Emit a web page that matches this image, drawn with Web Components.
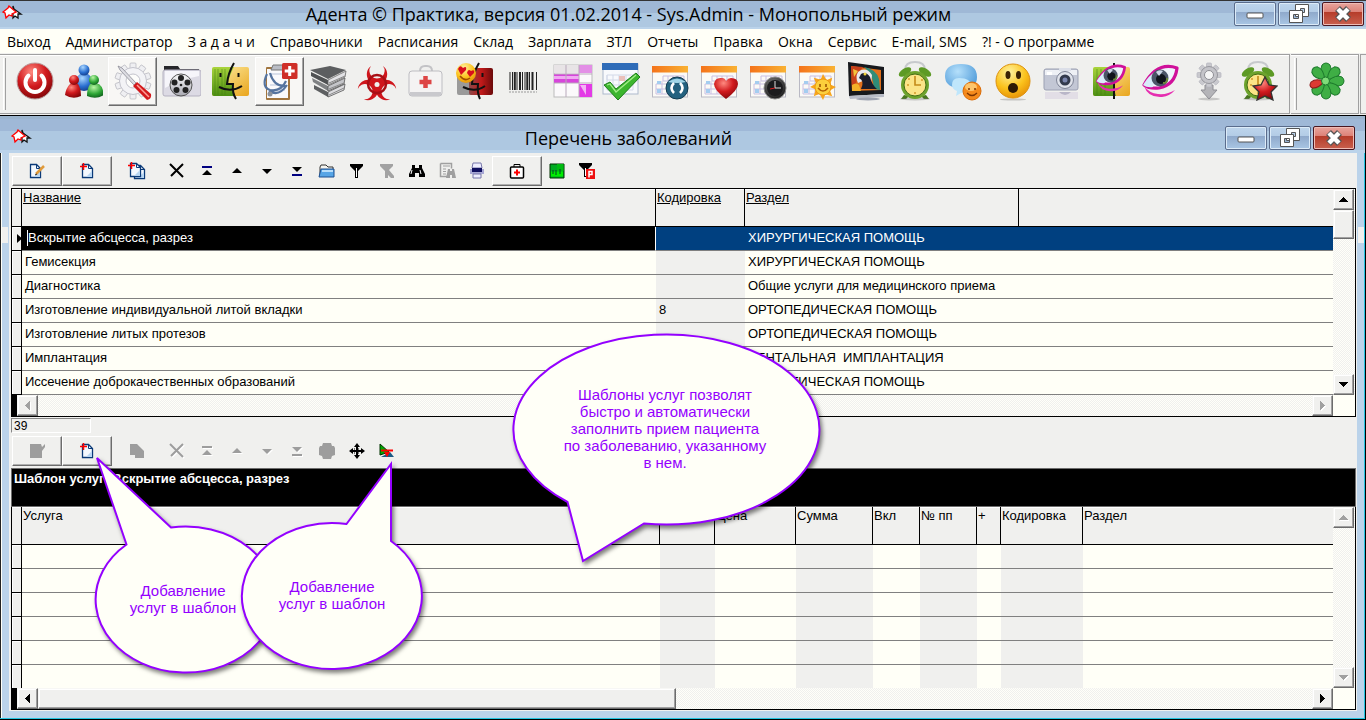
<!DOCTYPE html>
<html lang="ru">
<head>
<meta charset="utf-8">
<title>Адента © Практика</title>
<style>
html,body{margin:0;padding:0;background:#f0f0ee}
body{font-family:"Liberation Sans",Arial,sans-serif;font-size:13px;color:#000}
</style>
</head>
<body>
<practice-app></practice-app>
<script>
/* ---------- icon drawings ---------- */
const calendar = extra => `<rect x="2.500" y="6" width="35" height="30" fill="#fbfaf6" stroke="#b9b9c4"/><rect x="2" y="5" width="36" height="6.500" fill="url(#or)"/><g fill="none" stroke="#c9bfe2"><path d="M13 15h21v5h-21zM18 15v18M23 15v8M28 15v8M6 23h28M6 28h14M6 33h24M6 23v10M12 20v13"/></g><g fill="#a5cdf0"><path d="M7 20h4v3H7zM7 28h4v4H7z"/></g>${extra}`;
const finder = (a, b) => `<rect x="2" y="6" width="37" height="29" rx="2" fill="${b}"/><path d="M4 6h20q-5 9-6 17h5q0 7 2 12H4q-2 0-2-2V8q0-2 2-2z" fill="${a}"/>`;
const profile = `<path d="M24 2q-6 10-7 21h6q-1 9 3 15" fill="none" stroke="#111" stroke-width="2"/><path d="M9 26q12 6 23-1" fill="none" stroke="#111" stroke-width="2"/><path d="M10.500 12v4M28.500 12v4" stroke="#111" stroke-width="2"/>`;
const eye = (s) => `<g transform="${s}"><path d="M4 22Q17-2 37 5q-2 17-18 20Q9 26 4 22z" fill="#eef4fb" stroke="#d0109a" stroke-width="3.200" stroke-linejoin="round"/><path d="M3 22q6-10 12-13l-2 15q-6 1-10-2z" fill="#d9ecfa"/><circle cx="20" cy="15" r="8.500" fill="#4b5568"/><circle cx="21" cy="16" r="5" fill="#10141c"/><path d="M16 9q3-3 7-1l-4 5z" fill="#cfd8e8"/><path d="M23 20q5 0 4-5" stroke="#6c8b39" stroke-width="2" fill="none"/><path d="M4 23q4 12 18 11 8-1 13-7-8 5-17 4-9-1-14-8z" fill="#e62eb0"/></g>`;
const clock = `<path d="M10 9q0-8 10-8t10 8" fill="none" stroke="#c7c9cc" stroke-width="2"/><ellipse cx="10" cy="11" rx="7" ry="3.500" transform="rotate(-32 10 11)" fill="#5d9a25"/><ellipse cx="30" cy="11" rx="7" ry="3.500" transform="rotate(32 30 11)" fill="#5d9a25"/><path d="M9 34l-3 4h5l3-3zM31 34l3 4h-5l-3-3z" fill="#47761e"/><ellipse cx="20" cy="38" rx="15" ry="1.500" fill="#777" opacity=".35"/><circle cx="20" cy="24" r="14" fill="#6da32d"/><circle cx="20" cy="24" r="11" fill="#fbe487" stroke="#426d12"/><path d="M20 15v9l6 0" stroke="#c48a1a" stroke-width="1.600" fill="none"/><g fill="#d39b2a"><circle cx="13" cy="24" r="1"/><circle cx="20" cy="32" r="1"/><circle cx="27" cy="19" r="1"/><circle cx="14" cy="18" r="1"/></g>`;
const teeth = (n, cx, cy, r, w, h, c) => Array.from({length:n},(_,k)=>`<rect x="${cx-w/2}" y="${cy-r-h+1}" width="${w}" height="${h}" rx="1" fill="${c}" stroke="#b5b5bd" stroke-width=".7" transform="rotate(${k*360/n} ${cx} ${cy})"/>`).join('');
const DEFS = `<defs>
<radialGradient id="rd" cx=".4" cy=".25" r=".8"><stop offset="0" stop-color="#ff8a80"/><stop offset=".5" stop-color="#d11a1e"/><stop offset="1" stop-color="#7d0508"/></radialGradient>
<radialGradient id="bl" cx=".4" cy=".25" r=".8"><stop offset="0" stop-color="#a9d6ff"/><stop offset=".6" stop-color="#2a6fd0"/><stop offset="1" stop-color="#123a86"/></radialGradient>
<radialGradient id="sk" cx=".4" cy=".25" r=".9"><stop offset="0" stop-color="#b5e0fb"/><stop offset="1" stop-color="#3287cf"/></radialGradient>
<radialGradient id="gn" cx=".4" cy=".25" r=".8"><stop offset="0" stop-color="#b8f5a4"/><stop offset=".6" stop-color="#2da635"/><stop offset="1" stop-color="#0e5c1b"/></radialGradient>
<radialGradient id="yl" cx=".4" cy=".25" r=".85"><stop offset="0" stop-color="#fff3a0"/><stop offset=".55" stop-color="#fbc21c"/><stop offset="1" stop-color="#e28703"/></radialGradient>
<radialGradient id="bk" cx=".4" cy=".3" r=".8"><stop offset="0" stop-color="#777"/><stop offset="1" stop-color="#111"/></radialGradient>
<linearGradient id="or"><stop offset="0" stop-color="#f4731b"/><stop offset="1" stop-color="#f9b233"/></linearGradient>
<linearGradient id="gr" x2="0" y2="1"><stop offset="0" stop-color="#a9d43c"/><stop offset="1" stop-color="#4d8f12"/></linearGradient>
<linearGradient id="ye" x2="1" y2="1"><stop offset="0" stop-color="#fff0a8"/><stop offset="1" stop-color="#e9a51d"/></linearGradient>
<linearGradient id="dr"><stop offset="0" stop-color="#8a4a4a"/><stop offset=".5" stop-color="#c21a1a"/><stop offset="1" stop-color="#6b0a0a"/></linearGradient>
<linearGradient id="sv" x2="0" y2="1"><stop offset="0" stop-color="#fafafa"/><stop offset="1" stop-color="#a9a9b2"/></linearGradient></defs>`;
const arm = 'M13 0A12 12 0 1 0 27 0A9 9 0 1 1 13 0z';
const BIG = {
power:`<circle cx="21" cy="20" r="18" fill="url(#rd)" stroke="#b9a0a0"/><path d="M14.500 14.500a9.500 9.500 0 1 0 13 0" fill="none" stroke="#fff" stroke-width="4" stroke-linecap="round"/><path d="M21 9v10" stroke="#fff" stroke-width="4" stroke-linecap="round"/>`,
people:`<path d="M17 13q-5 3-5 14 9 6 18 0 0-11-5-14z" fill="url(#bl)"/><circle cx="21" cy="9" r="5.500" fill="url(#bl)"/><path d="M7 23q-4 4-5 11 8 5 16 1 0-8-3-12z" fill="url(#rd)"/><circle cx="11" cy="19" r="5" fill="url(#rd)"/><path d="M27 23q-3 5-3 12 9 4 17-1-1-8-5-11z" fill="url(#gn)"/><circle cx="31" cy="19" r="5" fill="url(#gn)"/>`,
tools:`${teeth(10,21,20,13,6,6,'#efeff2')}<circle cx="21" cy="20" r="13.500" fill="#f3f3f6" stroke="#c3c3cc"/><circle cx="21" cy="20" r="7" fill="#fdfdfb" stroke="#c3c3cc"/><path d="M6 5l4 2 14 15-2 2L8 9z" fill="#dcdce2" stroke="#8c8c96" stroke-width=".8"/><path d="M21 25l4-4 14 12q1 5-4 6z" fill="#d3181b"/><path d="M25 24l12 12" stroke="#ff9d97" stroke-width="1.500"/>`,
film:`<path d="M3 5h14l2 3h19v4H3z" fill="#26262a"/><rect x="2" y="9" width="38" height="26" rx="2" fill="#dcdae4" stroke="#b4b1c0"/><path d="M4 10h34v5q-18 3-34 12z" fill="#f6f5fa"/><circle cx="20" cy="24" r="11" fill="url(#sv)" stroke="#555"/><g fill="#222"><circle cx="20" cy="17" r="3"/><circle cx="26.500" cy="21.500" r="3"/><circle cx="24.500" cy="29" r="3"/><circle cx="15.500" cy="29" r="3"/><circle cx="13.500" cy="21.500" r="3"/><circle cx="20" cy="24" r="1.300"/></g>`,
finder:`${finder('url(#gr)','url(#ye)')}<g stroke="#3f7d10" opacity=".5"><path d="M5 8v26M8 8v26M12 8v26M15 8v26"/></g>${profile}`,
clip:`<rect x="7" y="6" width="24" height="33" rx="1" fill="#a1753e"/><rect x="8" y="8" width="21" height="29" fill="#fafafc"/><path d="M14 4h10l2 5H12z" fill="#b9bcc4" stroke="#777"/><path d="M11 13h15M11 24h15M11 29h15" stroke="#b9c4da"/><path d="M8 13q-6 13 3 16 11 2 16-9M11 12q4 14 16 13M10 30q10 6 18-6" fill="none" stroke="#56749f" stroke-width="2.200"/><circle cx="11" cy="33" r="2.500" fill="#8a929e"/><rect x="23" y="2" width="15.500" height="16" rx="1.500" fill="#cf2f28"/><path d="M30.700 5v10M25.700 10h10" stroke="#fff" stroke-width="3"/>`,
books:`<path d="M2 9l20-4 16 4-18 9z" fill="#5c5e60"/><path d="M3 11l17 8v5L3 15z" fill="#4f5153"/><path d="M20 19l18-9-1 6-17 8z" fill="#e2e2e5" stroke="#666" stroke-width=".8"/><path d="M4 17l16 8v5L5 21z" fill="#7f8183"/><path d="M20 25l17-8-1 6-16 7z" fill="#c4c5c9" stroke="#555" stroke-width=".8"/><path d="M6 24l14 7v5L6 28z" fill="#5e6062"/><path d="M20 31l17-8-1 6-16 7z" fill="#dcdcdf" stroke="#555" stroke-width=".8"/><path d="M21 22l16-7M21 28l15-6M21 34l15-7" stroke="#888"/>`,
bio:`<g fill="#cf161c" transform="translate(3 5) scale(.85)"><path d="${arm}"/><path d="${arm}" transform="rotate(120 20 22)"/><path d="${arm}" transform="rotate(240 20 22)"/></g><circle cx="20" cy="23" r="9" fill="none" stroke="#a80f15" stroke-width="2.500"/><circle cx="20" cy="23.500" r="2.500" fill="#f0f0ee"/>`,
aid:`<path d="M14 10q0-5 5-5h2q5 0 5 5" fill="none" stroke="#c3c3c6" stroke-width="2"/><rect x="3" y="10" width="33" height="25" rx="3" fill="#f4f3f3" stroke="#bdbdc2"/><path d="M4 31h31v2q0 2-3 2H7q-3 0-3-2z" fill="#c9c9cd"/><path d="M19.500 15v12M13.500 21h12" stroke="#dd4545" stroke-width="4.500"/>`,
love:`<rect x="2" y="14" width="18" height="20" rx="2" fill="#9a9a9a"/><rect x="14" y="7" width="24" height="27" rx="2" fill="url(#dr)"/><path d="M24 2q-7 12-7 21h6q-1 9 2 15" fill="none" stroke="#111" stroke-width="2"/><path d="M8 26q12 6 22-1M27.500 12v4" fill="none" stroke="#111" stroke-width="2"/><circle cx="11" cy="12" r="10" fill="url(#yl)"/><path d="M3 8q2-5 5-1 4-3 3 2l-5 5zM12 12q1-5 4-2 4-2 3 2l-4 4z" fill="#d80f1c"/><path d="M5 15q5 6 10 2" fill="none" stroke="#a14d00" stroke-width="1.500"/>`,
barcode:`<path d="M6 11v18M8.500 11v18M13 11v18M18.500 11v18M21 11v18M25.500 11v18M32.500 11v18" stroke="#222" stroke-width="1"/><path d="M10.800 11v18M16 11v18M23.300 11v18M28.500 11v18" stroke="#222" stroke-width="2"/><path d="M5 31h28" stroke="#999" stroke-dasharray="2 1"/>`,
table:`<rect x="1" y="4" width="38" height="32" fill="#fbf9fb" stroke="#bbb"/><path d="M1 4h25v8H1z" fill="#e8e4e6"/><path d="M26 4h13v8H26z" fill="#e38fe6"/><path d="M1 13h25v9H1z" fill="#d845dc"/><path d="M1 15h25v3H1z" fill="#f0a9f2"/><path d="M26 23h13v13H26z" fill="#e339e6"/><path d="M27 24h6v10z" fill="#f3b5f4"/><path d="M13 4v32M26 4v32M1 13h38M1 22h38" stroke="#b9a9bb"/>`,
check:`<rect x="1" y="3" width="35" height="30" fill="#f8f9fc" stroke="#aeb9cc"/><rect x="0" y="2" width="36" height="7" fill="#2f6cb8"/><path d="M5 14h26v5H5zM5 24h26M11 14v16M17 14v16M24 14v16M5 14v15h26V14" stroke="#d3d9e8" fill="none"/><path d="M17 15h6v5h-6z" fill="#eac0bb"/><path d="M2 24l6-3 6 7L34 12l4 4-22 23z" fill="#3cb62e" stroke="#1d7d1a"/><path d="M5 24l3-1 6 8 20-17" fill="none" stroke="#a3ed8a" stroke-width="1.300"/>`,
calSync:calendar(`<circle cx="27" cy="27" r="11" fill="#23617f" stroke="#123b50"/><path d="M18 21q9-7 18 0-9 2-18 0z" fill="#9fd5e8"/><path d="M24 22q-5 5 0 10M30 22q5 5 0 10" stroke="#fff" stroke-width="2.500" fill="none"/>`),
calHeart:calendar(`<path d="M27 38Q15 29 15 23q1-7 8-6 3 0 4 3 2-3 5-3 7 0 7 6 0 6-12 15z" fill="url(#rd)"/>`),
calClock:calendar(`<circle cx="27" cy="27" r="11" fill="url(#bk)" stroke="#888"/><circle cx="27" cy="27" r="8" fill="#1b1b1d"/><path d="M27 20v7h6" stroke="#ddd" fill="none"/><path d="M27 27l-5 1" stroke="#d22"/>`),
calSun:calendar(`<g fill="#f7a51c">${Array.from({length:8},(_,k)=>`<path d="M23 20l3-7 4 7z" transform="rotate(${k*45} 26 26)"/>`).join('')}</g><circle cx="26" cy="26" r="8" fill="#fccf3c" stroke="#ee9a13"/><path d="M23 23v3M29 23v3" stroke="#964f00" stroke-width="1.500"/><path d="M21 27q5 6 10 0" fill="none" stroke="#b15f00" stroke-width="1.500"/>`),
tv:`<path d="M2 1l36 5v27L3 35z" fill="#17191d"/><path d="M5 5l30 4v20L6 30z" fill="#e0701c"/><path d="M5 5l12 1q-9 9-6 24H6z" fill="#c8401a"/><path d="M7 8l5 2-4 6z" fill="#f2c33b"/><path d="M18 6q12 2 15 12l1 11-7-1q2-13-9-22z" fill="#2f8d78"/><path d="M12 11q8-6 14 3l-1 9-6-4-7 3q-3-6 0-11z" fill="#e9e9ec"/><path d="M15 13q5-3 9 3 2 8 7 12H15q4-8-2-11z" fill="#191d2a"/><circle cx="19" cy="13" r="1.500" fill="#f0d23c"/><path d="M6 24q4-3 7 0l2 6H6z" fill="#f2b028"/><path d="M3 35l35-2v3L4 38z" fill="#b8bcc7"/><ellipse cx="22" cy="38" rx="12" ry="1.500" fill="#9ea3b1"/>`,
clock,
chat:`<path d="M17 3q16 0 16 13 0 11-14 12l-6 5 0-6Q1 25 1 15 1 3 17 3z" fill="url(#sk)"/><path d="M15 17q12 0 12 8 0 7-10 7l-5 3 1-5q-5-2-5-6 0-7 7-7z" fill="#bfe6fb"/><circle cx="28" cy="30" r="9" fill="#f58a1c" stroke="#d96c08"/><ellipse cx="27" cy="26" rx="6" ry="4" fill="#fdc56c"/><path d="M25 27v2M31 27v2" stroke="#7d3500" stroke-width="1.500"/><path d="M23 32q5 5 10 0" fill="none" stroke="#7d3500" stroke-width="1.300"/>`,
wow:`<ellipse cx="20" cy="38.500" rx="13" ry="1" fill="#999" opacity=".5"/><circle cx="20" cy="20" r="17" fill="url(#yl)" stroke="#dd920f"/><ellipse cx="15" cy="14" rx="2.500" ry="4" fill="#3b2204"/><ellipse cx="25.500" cy="14" rx="2.500" ry="4" fill="#3b2204"/><circle cx="20" cy="27" r="5" fill="#2e1a05"/>`,
camera:`<rect x="2" y="8" width="34" height="21" rx="2" fill="#c3c7d5" stroke="#9ca1b3"/><path d="M3 9h32v5H3z" fill="#eef0f5"/><path d="M17 7h12v3H17z" fill="#dcdfe8"/><rect x="5" y="11" width="5" height="3" fill="#fff"/><circle cx="23" cy="19" r="8.500" fill="#dfe2ea" stroke="#7f8496"/><circle cx="23" cy="19" r="5.500" fill="#333a4c"/><circle cx="23" cy="19" r="2.500" fill="#7b86ac"/><path d="M3 31h33v7H3z" fill="#dcd6e2" opacity=".7"/><path d="M17 31q6 6 12 0z" fill="#b9b6c8"/>`,
eyeFace:`${finder('url(#gr)','url(#ye)')}<path d="M23 2v36" stroke="#111" stroke-width="2"/><path d="M6 8v26M10 8v26M14 8v26" stroke="#3f7d10" opacity=".5"/>${eye('translate(3 2) scale(.83)')}`,
eye:eye('translate(0 2)'),
gearDown:`<ellipse cx="20" cy="38" rx="11" ry="1.500" fill="#888" opacity=".4"/><path d="M16 24h8v5h4L20 38 12 29h4z" fill="#b4b4b8" stroke="#8e8e94"/>${teeth(8,20,14,8,5,5,'#c9c9ce')}<circle cx="20" cy="14" r="8.500" fill="#c4c4c9" stroke="#97979d"/><circle cx="20" cy="14" r="4.500" fill="#f5f5f5" stroke="#8e8e94"/>`,
clockStar:`${clock}<path d="M27 16l4 8 8 1-6 6 2 8-8-4-8 4 2-8-6-6 8-1z" fill="url(#rd)" stroke="#333" stroke-width="1.300"/>`,
flower:`<g fill="#3fae45" stroke="#1d7a2c">${[0,45,90,135,180,225,315].map(a=>`<path d="M20 18Q13 10 16 4q4-4 8 0 3 6-4 14z" transform="rotate(${a} 20 20)"/>`).join('')}</g><path d="M18 20q-7 6-13 4-3-3 0-6 6-3 13 2z" transform="rotate(-12 20 20)" fill="#dc3a33" stroke="#8f1c1c"/><circle cx="19.500" cy="20" r="4" fill="#7fdc79" stroke="#1d7a2c"/>`
};
const page = (x,y) => `<path d="M${x+.5} ${y+.5}h6l4 4v9h-10z" fill="#f4f9ff" stroke="#0b3a78" stroke-width="1.300"/><path d="M${x+6.5} ${y+.5}v4h4" fill="none" stroke="#0b3a78"/><path d="M${x+4} ${y+13}h6v-6z" fill="#b8d6f2"/>`;
const star = (x,y) => `<path d="M${x} ${y+3.5}h7M${x+3.500} ${y}v7" stroke="#f00" stroke-width="1.500"/>`;
const SMALL = {
edit:`${page(2,2)}<path d="M8 12l8-8" stroke="#e09a3a" stroke-width="2.500"/><path d="M7 13l2-1" stroke="#222"/>`,
newdoc:`${page(4,2)}${star(2,1)}`,
copydoc:`${page(6,3)}<g transform="translate(-1 -2)">${page(3,3)}</g>${star(0,0)}`,
cross:`<path d="M2 2l13 13M15 2L3 14" stroke="currentColor" stroke-width="2"/>`,
first:`<path d="M4 4h10v2H4z" fill="var(--nv,#000080)"/><path d="M4 13h10L9 8z" fill="currentColor"/>`,
up:`<path d="M4 11h10L9 6z" fill="currentColor"/>`,
down:`<path d="M4 7h10L9 12z" fill="currentColor"/>`,
last:`<path d="M4 12h10v2H4z" fill="var(--nv,#000080)"/><path d="M4 5h10L9 10z" fill="currentColor"/>`,
folder:`<path d="M2 14V5l1-2h5l2 2h5v3" fill="#f5f5f0" stroke="#333"/><path d="M1 15l2-8h13v8z" fill="#57a5e6" stroke="#1c4f90"/><path d="M4 8h11v2H4z" fill="#b9defa"/>`,
filter:`<path d="M2 2h13v2l-5 5v7H7V9L2 4z" fill="#000"/><path d="M8.500 6v9" stroke="#fff"/>`,
nofilter:`<path d="M2 2h13v2l-4 4 5 6v2h-3l-3-3v3H7V9L2 4z" fill="#a2a2a2"/>`,
binoc:`<path d="M4 3h3v3h4V3h3v3l3 6v3h-6v-4H7v4H1v-3l3-6z" fill="#000"/><path d="M4 8l-1 4M12 8l1 4" stroke="#fff"/>`,
sheet:`<path d="M2.500 1.500h11v5M2.500 1.500v13h7" fill="none" stroke="#a0a0a0" stroke-width="1.500"/><path d="M5 4h7M5 7h3M5 9.500h3M5 12h3" stroke="#a0a0a0"/><path d="M10 7h2v2h2V7h2l2 9h-4v-3h-2v3H8z" fill="#a0a0a0"/>`,
print:`<path d="M5 1h8l1 5H4z" fill="#eef" stroke="#77a"/><path d="M2 7h14v5H2z" fill="#a7a7d4"/><path d="M4 6h10v4H4z" fill="#101060"/><path d="M5 12h8v4H5z" fill="#eef" stroke="#77a"/>`,
med:`<path d="M6 5V2.500h6V5" fill="none" stroke="#000"/><rect x="2.500" y="5" width="13" height="11" rx="1" fill="#fff" stroke="#000" stroke-width="1.500"/><path d="M9 7.500v6M6 10.500h6" stroke="#f00" stroke-width="2"/>`,
green:`<path d="M2 2h14v14H2z" fill="#0a2" stroke="#030"/><path d="M9 2h6.500v7H9z" fill="#0b1"/><path d="M3 9.500h12v5H3z" fill="#0e0"/><path d="M5 8v4M8 8v5M12 7v5" stroke="#042"/>`,
filterP:`<path d="M1 1h13v2L9 8v7H6V8L1 3z" fill="#000"/><path d="M7.500 6v8" stroke="#fff"/><rect x="8" y="7" width="9" height="10" fill="#e11"/><path d="M11 15.500v-6h3v3h-3" fill="none" stroke="#fff" stroke-width="1.500"/>`,
editOff:`<path d="M2 2h11l1 3 3-3v3l-3 4v7H2z" fill="#9d9d9d"/>`,
copyOff:`<path d="M2 2h7l3 3 4 4v7H7v-3H2z" fill="#9d9d9d"/>`,
blob:`<path d="M5 1h8l1 3h2l1 2v7l-3 1-1 3H5l-1-3-3-1V6l1-2h2z" fill="#9d9d9d"/>`,
move:`<path d="M9 1l3 4H6zM9 17l3-4H6zM1 9l4-3v6zM17 9l-4-3v6z" fill="#000"/><path d="M9 4v10M4 9h10" stroke="#000" stroke-width="2"/><path d="M6 7h6M6 11h6" stroke="#000" stroke-dasharray="1 1"/>`,
chart:`<path d="M2 2l9 8-9 3z" fill="#0a0" stroke="#030"/><path d="M3 15h13l-4-5z" fill="#1c5a84"/><path d="M3 8.500h12" stroke="#f00" stroke-width="2"/><path d="M6 10h6l-3 5z" fill="#f00"/>`
};
const define = (tag, html, setup) => {
  const tpl = document.createElement('template');
  if (html) tpl.innerHTML = html;
  customElements.define(tag, class extends HTMLElement {
    connectedCallback() {
      if (this.shadowRoot) return;
      const root = this.attachShadow({mode:'open'});
      root.append(tpl.content.cloneNode(true));
      if (setup) setup(this, root);
    }
  });
};

/* logo of the programme */
define('app-logo', `<style>:host{display:block;width:21px;height:18px}svg{display:block}</style>
<svg width="21" height="15" viewBox="0 0 21 15" aria-hidden="true"><path d="M11 1l1 3 7 5h-3v4l-3-2-2 2z" fill="#fff" stroke="#111" stroke-width="1.300"/><path d="M7 1l7 6-4 2v2l-3-1-3 3-1-5-2-1 5-4z" fill="#fff" stroke="#f00" stroke-width="1.300"/></svg>`);

/* minimise, restore, close */
define('window-buttons', `<style>
:host{display:flex;gap:2px}
button{box-sizing:border-box;width:42px;height:24px;padding:0;border:1px solid #5a6c8c;border-radius:2px;background:linear-gradient(#bed5ec 0,#b3cce6 40%,#8fa9cb 42%,#a9c6e4 100%);box-shadow:inset 0 0 0 1px #dcebf8}
.x{border-color:#4a1620;background:linear-gradient(#e8a59d 0,#dd8278 40%,#b53c2a 42%,#c8604e 100%);box-shadow:inset 0 0 0 1px #efbcb5}
svg{display:block;margin:auto}
</style>
<button aria-label="Свернуть"><svg width="22" height="20"><rect x="3" y="9" width="16" height="5" rx="1" fill="#fff" stroke="#555"/></svg></button>
<button aria-label="Восстановить"><svg width="22" height="20"><g fill="#fff" fill-rule="evenodd" stroke="#555"><path d="M7.500 .5h13v12h-13zM12.500 4.500h4v4h-4z"/><path d="M1.500 6.500h13v12h-13zM5.500 10.500h5v4h-5z"/></g></svg></button>
<button class="x" aria-label="Закрыть"><svg width="22" height="20"><path d="M5.500 4.500l11 11M16.500 4.500l-11 11" stroke="#555" stroke-width="7"/><path d="M6 5l10 10M16 5L6 15" stroke="#fff" stroke-width="4.500"/></svg></button>`);

define('title-bar', `<style>
:host{display:flex;align-items:center;gap:12px;font-family:"Open Sans","Noto Sans",sans-serif;font-size:18px;line-height:24px}
h1{flex:1;margin:0;font:inherit;text-align:center;white-space:nowrap}
</style><app-logo></app-logo><h1><slot></slot></h1><window-buttons></window-buttons>`);

define('menu-bar', `<style>
:host{display:block;background:#fffff7;font-family:"Open Sans","Noto Sans",sans-serif;font-size:14px;line-height:23px}
nav{display:flex;gap:15px;padding:1px 7px 0;height:23px;overflow:hidden}
a{color:#000;text-decoration:none;white-space:pre}
</style><nav></nav>`, (el, root) => {
  root.querySelector('nav').innerHTML = el.getAttribute('items').split('|').map(t => `<a href="#">${t}</a>`).join('');
});

/* one strip of large toolbar buttons */
define('icon-strip', `<style>
:host{display:flex;box-sizing:border-box;height:60px;padding:2px 7px 0 3px;border:1px solid #a0a0a0;border-left:0;background:#f0f0ee;box-shadow:inset 0 1px #fff}
:host::before{content:"";flex:none;width:1px;height:52px;border-left:1px solid #fff;border-right:1px solid #a0a0a0;margin:1px 4px 0 0}
button{box-sizing:border-box;flex:0 1 49px;height:49px;padding:0 0 1px;border:1px solid transparent;background:none}
button.on{background:#f8f7f5;border-color:#fff #6c6c6c #6c6c6c #fff;box-shadow:inset -1px -1px #a6a6a6}
svg{display:block;margin:auto}
</style>`, (el, root) => {
  el.getAttribute('icons').split(' ').forEach(n => {
    const on = n.endsWith('*'), k = n.replace('*','');
    root.append(Object.assign(document.createElement('button'), {className: on ? 'on' : '', ariaLabel: k,
      innerHTML:`<svg width="40" height="40" viewBox="0 0 40 40">${DEFS}${BIG[k]}</svg>`}));
  });
});

/* record toolbar of the inner window */
define('record-bar', `<style>
:host{display:flex;padding:3px 0 2px 1px}
button{box-sizing:border-box;flex:none;width:30px;height:30px;padding:0;border:0;background:none;color:#000}
.w{width:50px}
.up{border:1px solid;border-color:#fff #6c6c6c #6c6c6c #fff;box-shadow:inset -1px -1px #b0b0b0}
button:disabled{color:#9d9d9d;--nv:#9d9d9d}
svg{display:block;margin:auto}
button:disabled svg{filter:drop-shadow(1px 1px 0 #fff)}
</style>`, (el, root) => {
  el.getAttribute('icons').split(' ').forEach(n => {
    const k = n.replace(/[^a-zA-Z]/g,'');
    const b = document.createElement('button');
    b.className = (n.includes('+') ? 'up w' : '') + (n.includes('_') ? 'w' : '');
    b.disabled = n.includes('-');
    b.ariaLabel = k;
    b.innerHTML = `<svg width="18" height="18" viewBox="0 0 18 18">${SMALL[k]}</svg>`;
    root.append(b);
  });
});

/* classic scroll bar: direction, optional thumb length, disabled arrows */
define('scroll-bar', `<style>
:host{display:flex;background:repeating-conic-gradient(#f0f0ee 0 25%,#fffff9 0 50%) 0 0/2px 2px}
:host([dir-v]){flex-direction:column;width:22px}
:host([dir-h]){height:21px}
button,.thumb{box-sizing:border-box;flex:none;padding:0;border:1px solid;border-color:#f7f7f5 #6c6c6c #6c6c6c #f7f7f5;background:#f0f0ee;box-shadow:inset -1px -1px #a0a0a0,inset 1px 1px #fff}
button{width:21px;height:21px}
:host([dir-h]) .thumb{height:21px;width:var(--thumb,0)}
:host([dir-v]) .thumb{width:21px;height:var(--thumb,0)}
.gap{flex:1}
svg{display:block;margin:auto;color:#000}
:host([off]) svg{color:#a0a0a0;filter:drop-shadow(1px 1px 0 #fff)}
.thumb[hidden]{display:none}
</style><button class="a"></button><div class="thumb"></div><div class="gap"></div><button class="b"></button>`, (el, root) => {
  const v = el.hasAttribute('dir-v');
  const tri = d => `<svg width="9" height="9" viewBox="0 0 9 9" shape-rendering="crispEdges"><path fill="currentColor" d="${d}"/></svg>`;
  const a = root.querySelector('.a'), b = root.querySelector('.b');
  a.innerHTML = tri(v ? 'M0 7h9L4.500 2z' : 'M7 0v9L2 4.500z');
  b.innerHTML = tri(v ? 'M0 2h9L4.500 7z' : 'M2 0v9L7 4.500z');
  a.ariaLabel = v ? 'Вверх' : 'Влево'; b.ariaLabel = v ? 'Вниз' : 'Вправо';
  const t = el.getAttribute('thumb');
  if (t) root.querySelector('.thumb').style.setProperty('--thumb', t); else root.querySelector('.thumb').hidden = true;
});

/* database grid with a record marker column */
define('data-grid', `<style>
:host{display:grid;grid-template-columns:1fr 22px;border:1px solid #000;background:#fffff7}
table{width:100%;table-layout:fixed;border-collapse:separate;border-spacing:0;font-size:13px;line-height:16px}
th,td{box-sizing:border-box;padding:0;text-align:left;font-weight:normal;white-space:pre;overflow:hidden}
th{height:38px;padding:1px 0 0 1px;vertical-align:top;background:#f0f0ee;border-right:1px solid #000;border-bottom:1px solid #000;box-shadow:inset 0 1px #fff}
th:last-child{border-right:0}
th a{color:#000}
td{height:24px;padding:0 0 1px 3px;border-bottom:1px solid #808080}
td.mark{padding:0;background:#f0f0ee;border-right:1px solid #000;border-bottom-color:#000;box-shadow:inset 1px 1px #fff}
td.mark svg{display:block;margin:0 0 0 4px}
td.gray{background:#f0f0ee}
tr.sel td{background:#004080;color:#fff}
tr.sel td.mark{background:#f0f0ee}
tr.sel td.cur{background:#000;border-right:1px solid #fff;padding-left:5px}
.cur span{display:inline-block;border-left:1px solid #fff}
tr.end td{height:23px;border-bottom:0}
.low{display:flex;background:#000;padding-left:5px}
.low scroll-bar{flex:1}
</style><table><colgroup></colgroup><thead><tr></tr></thead><tbody></tbody></table><scroll-bar dir-v class="v"></scroll-bar><div class="low"><scroll-bar dir-h class="h"></scroll-bar></div><div></div>`, (el, root) => {
  const {cols, rows, link, v, h} = GRIDS[el.getAttribute('source')];
  root.querySelector('colgroup').innerHTML = '<col style="width:10px">' + cols.map(c => c.w ? `<col style="width:${c.w}px">` : '<col>').join('');
  root.querySelector('thead tr').innerHTML = '<th></th>' + cols.map(c => `<th>${link && c.t ? `<a href="#">${c.t}</a>` : c.t}</th>`).join('');
  root.querySelector('tbody').innerHTML = rows.map((r, i) => {
    const sel = link && i === 0;
    return `<tr class="${sel ? 'sel' : ''}${!link && i === rows.length-1 ? 'end' : ''}"><td class="mark">${sel ? '<svg width="6" height="9"><path d="M1 0v9L6 4.500z"/></svg>' : ''}</td>` +
      cols.map((c, j) => `<td class="${c.g ? 'gray' : ''}${sel && j === 0 ? ' cur' : ''}">${sel && j === 0 ? `<span>${r[j]}</span>` : (r[j] || '')}</td>`).join('') + '</tr>';
  }).join('');
  for (const [q, o] of [['.v', v], ['.h', h]]) {
    const s = document.createElement('scroll-bar');
    s.setAttribute(q === '.v' ? 'dir-v' : 'dir-h', '');
    if (o.off) s.setAttribute('off', '');
    if (o.thumb) s.setAttribute('thumb', o.thumb);
    root.querySelector(q).replaceWith(s);
  }
});
const GRIDS = {
  illness:{ link:true, v:{thumb:'29px'}, h:{off:true},
    cols:[{t:'Название',w:634},{t:'Кодировка',w:89,g:1},{t:'Раздел',w:274},{t:''}],
    rows:[['Вскрытие абсцесса, разрез','','ХИРУРГИЧЕСКАЯ ПОМОЩЬ'],['Гемисекция','','ХИРУРГИЧЕСКАЯ ПОМОЩЬ'],['Диагностика','','Общие услуги для медицинского приема'],['Изготовление индивидуальной литой вкладки','8','ОРТОПЕДИЧЕСКАЯ ПОМОЩЬ'],['Изготовление литых протезов','','ОРТОПЕДИЧЕСКАЯ ПОМОЩЬ'],['Имплантация','','ДЕНТАЛЬНАЯ  ИМПЛАНТАЦИЯ'],['Иссечение доброкачественных образований','','ХИРУРГИЧЕСКАЯ ПОМОЩЬ']] },
  service:{ link:false, v:{off:true}, h:{thumb:'638px'},
    cols:[{t:'Услуга',w:638},{t:'',w:55,g:1},{t:'Цена',w:81},{t:'Сумма',w:77,g:1},{t:'Вкл',w:47},{t:'№ пп',w:57,g:1},{t:'+',w:24},{t:'Кодировка',w:82,g:1},{t:'Раздел'}],
    rows:[[],[],[],[],[],[]] }
};

/* balloon note; the slot is centred in the oval part */
define('note-balloon', `<style>
:host{position:absolute;display:block}
svg{position:absolute;left:0;top:0;overflow:visible;filter:drop-shadow(2px 3px 2px rgba(0,0,0,.5))}
path{fill:#fffff7;stroke:#9400ff;stroke-width:2}
div{position:absolute;display:flex;align-items:center;justify-content:center;text-align:center;color:#9400ff;font-size:15px;line-height:17px;white-space:pre-line}
p{margin:0}
</style><svg width="1" height="1" aria-hidden="true"><path/></svg><div><p><slot></slot></p></div>`, (el, root) => {
  root.querySelector('path').setAttribute('d', el.getAttribute('shape'));
  const [x,y,w,h] = el.getAttribute('oval').split(' ');
  Object.assign(root.querySelector('div').style, {left:x+'px',top:y+'px',width:w+'px',height:h+'px'});
});

define('child-window', `<style>
:host{display:block;position:relative;border:solid #000;border-width:1px 1px 1px 0;background:#bbd3ea;box-shadow:inset -1px -1px #23c4e0,inset 1px 0 #222,inset 2px 0 #fffff7}
title-bar{height:37px;box-sizing:border-box;padding:7px 10px 0 11px;background:linear-gradient(#9bb4cd 0 3px,#9fb8d7 3px 15px,#aec8e1 15px 34px,#bbd3ea 34px)}
main{display:block;margin:0 8px 8px 9px;padding:0 1px 1px 2px;background:#f0f0ee}
:host::before,:host::after{content:"";position:absolute;top:111px;left:2px;width:6px;height:16px;background:#f0f0ee}
:host::after{left:auto;right:1px}
</style><title-bar><slot name="title"></slot></title-bar><main><slot></slot></main>`);

define('practice-app', `<style>
:host{display:block;position:relative}
.top{height:29px;box-sizing:border-box;border-top:1px solid #333;padding:0 2px 2px 2px;background:linear-gradient(#9fb8d6 0 12px,#aec8e1 12px 26px,#bbd3ea 26px)}
.bars{display:grid;grid-template-columns:1fr 68px 6px;gap:0 1px;margin-top:1px;padding-bottom:1px;background:#f0f0ee}
output{display:block;box-sizing:border-box;width:80px;height:15px;margin-top:1px;padding-left:2px;border:1px solid;border-color:#888 #fff #fff #888;font-size:12px;line-height:14px}
h2{box-sizing:border-box;height:39px;margin:0;padding:1px 2px 0;border:1px solid #6d6d6d;background:#000;color:#fff;font-size:13px;line-height:17px}
data-grid.low{border-top:0}
.rest{height:60px;box-sizing:border-box;border:1px solid #a0a0a0;border-right:0}
.n1{left:512px;top:332px}.n2{left:93px;top:456px}.n3{left:242px;top:462px}
</style>
<title-bar class="top">Адента © Практика, версия 01.02.2014 - Sys.Admin - Монопольный режим</title-bar>
<menu-bar items="Выход|Администратор|З а д а ч и|Справочники|Расписания|Склад|Зарплата|ЗТЛ|Отчеты|Правка|Окна|Сервис|E-mail, SMS|?! - О программе"></menu-bar>
<div class="bars">
<icon-strip icons="power people tools* film finder clip* books bio aid love barcode table check calSync calHeart calClock calSun tv clock chat wow camera eyeFace eye gearDown clockStar"></icon-strip>
<icon-strip icons="flower"></icon-strip><div class="rest"></div>
</div>
<child-window><span slot="title">Перечень заболеваний</span>
<record-bar icons="edit+ newdoc+ copydoc_ cross first up down last folder filter nofilter binoc sheet print med+ green filterP"></record-bar>
<data-grid source="illness"></data-grid>
<output>39</output>
<record-bar icons="editOff+ newdoc+ copyOff_ cross- first- up- down- last- blob move chart"></record-bar>
<h2>Шаблон услуг: Вскрытие абсцесса, разрез</h2>
<data-grid class="low" source="service"></data-grid>
</child-window>
<note-balloon class="n1" oval="0 1 306 190" shape="M55.500 170L71 229L132 191.500A153 95 0 1 0 55.500 170z">Шаблоны услуг позволят
быстро и автоматически
заполнить прием пациента
по заболеванию, указанному
в нем.</note-balloon>
<note-balloon class="n2" oval="0 70 180 146" shape="M78 71.500L4 2L33.500 88.500A90 73 0 1 0 78 71.500z">Добавление
услуг в шаблон</note-balloon>
<note-balloon class="n3" oval="0 60 180 146" shape="M149 79L149 2L104.500 62A90 73 0 1 0 149 79z">Добавление
услуг в шаблон</note-balloon>`);
</script>
</body>
</html>
